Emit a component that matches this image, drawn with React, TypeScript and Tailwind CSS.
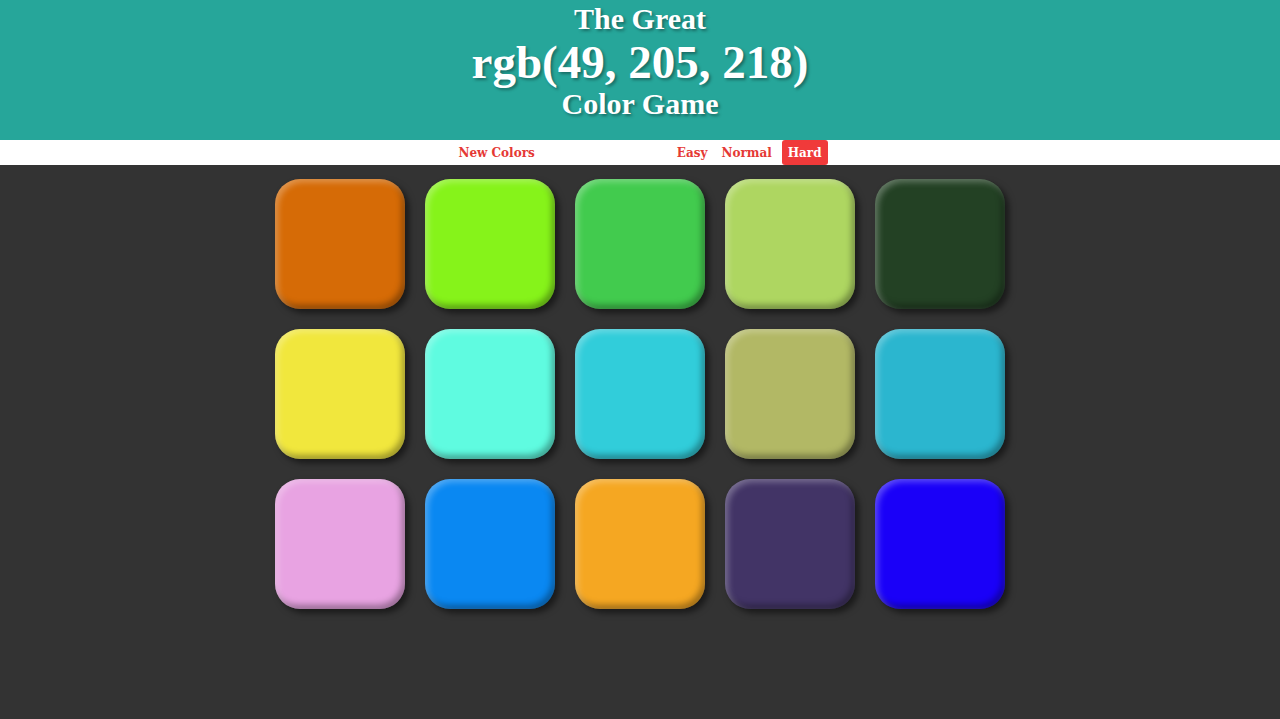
import React from 'react';

const colors = [
  '#d66b06', '#86f31a', '#42cb4e', '#aed661', '#234124',
  '#f1e73d', '#5ffbe0', '#31cdda', '#b2b865', '#2bb6cf',
  '#e8a3e2', '#0a88f2', '#f5a722', '#423466', '#1a00f8',
];

const App: React.FC = () => {
  return (
    <div className="min-h-[719px] bg-[#333333]">
      <h1 className="bg-[#26a69a] text-center text-white font-bold font-['Liberation_Serif',serif] [text-shadow:2px_2px_3px_rgba(0,0,0,0.35)] pt-[2px] pb-[19px]">
        <span className="block text-[30px] leading-[34px]">The Great</span>
        <span className="block text-[47px] leading-[50px] mt-[1px]">rgb(49, 205, 218)</span>
        <span className="block text-[30px] leading-[34px]">Color Game</span>
      </h1>

      {/* barra de controles */}
      <div className="bg-white h-[25px] flex justify-center font-['DejaVu_Serif',serif] font-bold text-[12px] text-[#e53935]">
        <div className="flex items-stretch mr-[6px]">
          <button className="px-3">New Colors</button>
          <div className="w-[123px]" />
          <button className="px-[7px]">Easy</button>
          <button className="px-[7px]">Normal</button>
          <button className="ml-[3px] px-[6px] bg-[#f03a3a] text-white rounded-[3px]">Hard</button>
        </div>
      </div>

      <div className="grid grid-cols-[repeat(5,130px)] gap-5 justify-center pt-[14px]">
        {colors.map((c) => (
          <div
            key={c}
            className="w-[130px] h-[130px] rounded-[25px] shadow-[inset_3px_3px_6px_rgba(255,255,255,0.3),inset_-3px_-4px_6px_rgba(0,0,0,0.35),4px_4px_6px_rgba(0,0,0,0.5)]"
            style={{ backgroundColor: c }}
          />
        ))}
      </div>
    </div>
  );
};

export default App;
